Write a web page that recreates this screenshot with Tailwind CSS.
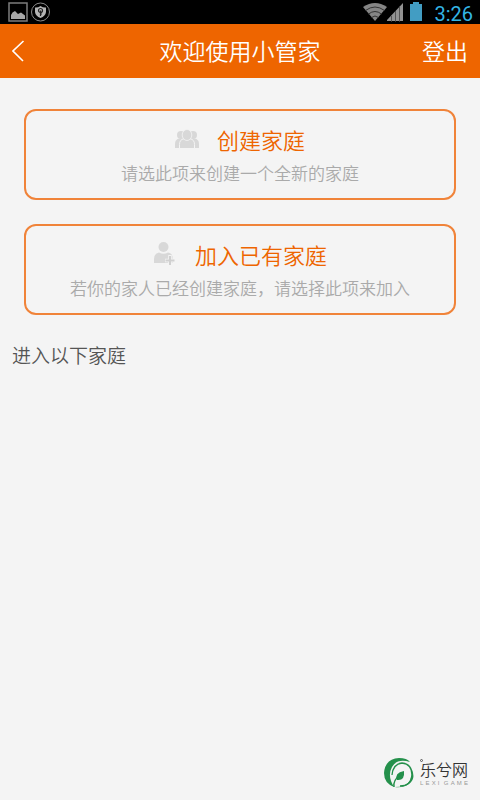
<!DOCTYPE html>
<html lang="zh-CN">
<head>
<meta charset="utf-8">
<meta name="viewport" content="width=device-width, initial-scale=1">
<title>欢迎使用小管家</title>
<script src="https://cdn.jsdelivr.net/npm/@tailwindcss/browser@4"></script>
</head>
<body class="flex min-h-screen flex-col bg-[#f4f4f4] font-['Noto_Sans_CJK_SC',sans-serif] font-[350]">
  <div class="flex h-6 items-center justify-between bg-black pl-2 pr-[7px]">
    <div class="flex items-center gap-[3px]">
      <svg class="h-5 w-5" viewBox="0 0 20 20" fill="none" aria-hidden="true">
        <rect x="1" y="1" width="18" height="18" stroke="#7c7c7c" stroke-width="1.5"/>
        <path d="M3 17v-4l1.500-2.500L7 9l3 3 3-1.500 2 1.500 2 1.500V17z" fill="#a8a8a8"/>
      </svg>
      <svg class="h-5 w-5" viewBox="0 0 20 20" fill="none" aria-hidden="true">
        <circle cx="9.500" cy="10" r="9" stroke="#8a8a8a"/>
        <path d="M4 5.500Q7 5.800 9.500 4Q12 5.800 15 5.500V10q-.5 4-5.500 6Q4.500 14 4 10z" fill="#b4b4b4"/>
        <circle cx="9.500" cy="8.500" r="2" stroke="#222" stroke-width="1.200"/>
        <path d="M9.500 8.500V14M9.500 12h1.500" stroke="#222" stroke-width="1.200"/>
      </svg>
    </div>
    <div class="flex items-center">
      <svg class="h-6 w-6" viewBox="0 0 24 24" fill="none" aria-hidden="true">
        <path d="M0 7Q12-1 24 7L12 21z" fill="#858585"/>
        <path d="M2.500 10.500Q12 3.500 21.500 10.500M5.500 14Q12 9 18.500 14M8.500 17.500Q12 14.500 15.500 17.500" stroke="#333" stroke-width="1"/>
      </svg>
      <svg class="h-6 w-[17px]" viewBox="0 0 17 24" aria-hidden="true">
        <path d="M0 21V20L16 3V21z" fill="#929292"/>
        <path d="M4.500 16V22M8.500 11V22M12.500 6V22" stroke="#444" stroke-width=".8"/>
      </svg>
      <svg class="ml-[6px] h-6 w-3" viewBox="0 0 12 24" aria-hidden="true">
        <path d="M0 4h3V2h6v2h3v17H0z" fill="#429dc3"/>
      </svg>
      <time class="ml-3 pt-1 font-[Roboto,sans-serif] text-[20px] font-normal leading-5 text-[#33b5e5]">3:26</time>
    </div>
  </div>

  <header class="grid h-[54px] grid-cols-[1fr_auto_1fr] items-center bg-[#ee6500] px-3 pb-[2px] text-[23px] leading-8 text-white">
    <button type="button" aria-label="返回" class="h-8 w-8 justify-self-start">
      <svg class="h-8 w-4" viewBox="0 0 16 32" fill="none" aria-hidden="true"><path d="M11.500 7L1 17L11 27" stroke="#fff" stroke-width="1.600"/></svg>
    </button>
    <h1 class="font-[350]">欢迎使用小管家</h1>
    <button type="button" class="justify-self-end">登出</button>
  </header>

  <main class="flex-1">
    <div class="flex flex-col gap-6 px-6 pt-[31px]">
      <button type="button" class="flex flex-col items-center gap-[6px] rounded-xl border-2 border-[#f08339] pb-[13px] pt-3">
        <span class="flex items-center gap-[18px] text-[22px] leading-8 text-[#ee6500]">
          <svg class="h-6 w-6" viewBox="0 0 24 24" fill="#d8d8d8" aria-hidden="true">
            <circle cx="6" cy="8" r="4"/><circle cx="18" cy="8" r="4"/>
            <path d="M0 21v-4q0-5 4.500-5.500H8V21zM24 21v-4q0-5-4.500-5.500H16V21z"/>
            <path d="M4.500 21.500v-4q0-5 4.500-5.700h6q4.500.7 4.500 5.700v4z" stroke="#f4f4f4" stroke-width="1"/>
            <ellipse cx="12" cy="8" rx="4.800" ry="5.500" stroke="#f4f4f4" stroke-width=".8"/>
          </svg>
          <span>创建家庭</span>
        </span>
        <span class="text-[17px] leading-6 text-[#aaa]">请选此项来创建一个全新的家庭</span>
      </button>
      <button type="button" class="flex flex-col items-center gap-[6px] rounded-xl border-2 border-[#f08339] pb-[13px] pt-3">
        <span class="flex items-center gap-[18px] text-[22px] leading-8 text-[#ee6500]">
          <svg class="h-6 w-6" viewBox="0 0 24 24" fill="#d8d8d8" aria-hidden="true">
            <circle cx="10.500" cy="5" r="5"/>
            <path d="M1 21v-4q0-5.500 5-6.500 4.500 2.500 9 0 4 1 4.500 4V21z"/>
            <path d="M17 13v10M12 18.500h10" stroke="#f4f4f4" stroke-width="3.500"/>
            <path d="M17 14v9M12.500 18.500h9" stroke="#d0d0d0" stroke-width="2"/>
          </svg>
          <span>加入已有家庭</span>
        </span>
        <span class="text-[17px] leading-6 text-[#aaa]">若你的家人已经创建家庭，请选择此项来加入</span>
      </button>
    </div>
    <h2 class="px-3 pt-[26px] text-[19px] font-[350] leading-7 text-[#555]">进入以下家庭</h2>
  </main>

  <div class="absolute bottom-3 right-3 flex items-center gap-[6px]">
    <svg class="h-[30px] w-[30px]" viewBox="0 0 30 30" aria-hidden="true">
      <path d="M10 29Q0 25 0 15Q1 1 15 0q8 0 11 4Q13 0 8 9Q3 18 10 29z" fill="#24904b"/>
      <path d="M8 17Q9 6 18 5q10 1 10 12-1 11-12 11" fill="none" stroke="#24904b" stroke-width="1.300"/>
      <path d="M11 29q10 0 14-5 3-4 3-12 4 9-3 14-6 4-14 3z" fill="#24904b"/>
      <path d="M20 13q1 10-7 9-3-7 7-9z" fill="#24904b"/>
      <path d="M10 29q-1-7 6-12" fill="none" stroke="#24904b" stroke-width="1.500"/>
    </svg>
    <div class="relative text-[#333]">
      <i class="absolute left-0 top-0 h-[3px] w-[3px] rounded-full border border-[#555]"></i>
      <div class="text-[16px] leading-5">乐兮网</div>
      <div class="flex justify-between font-['Liberation_Sans',sans-serif] text-[6px] leading-2 text-[#999]" aria-label="LEXI GAME">
        <span>L</span><span>E</span><span>X</span><span>I</span><span></span><span>G</span><span>A</span><span>M</span><span>E</span>
      </div>
    </div>
  </div>
</body>
</html>
